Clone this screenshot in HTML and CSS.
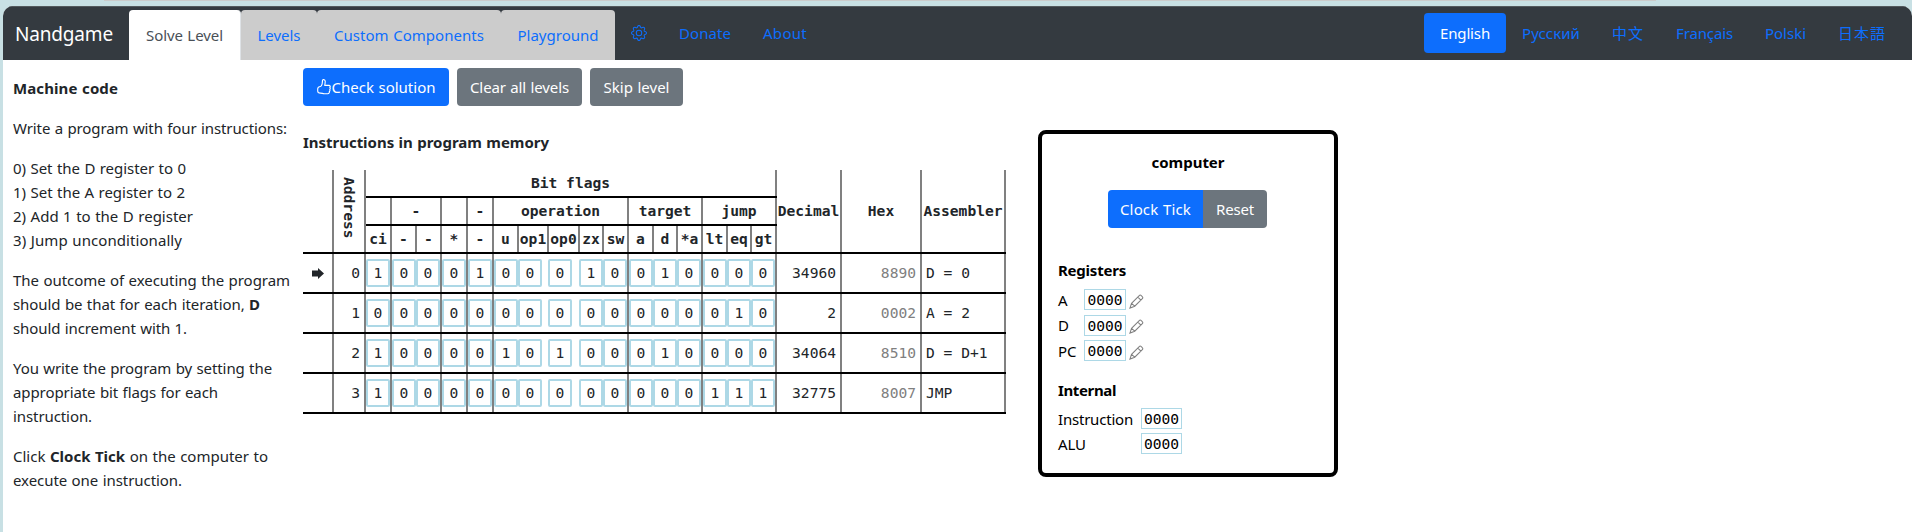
FILE: index.html
```
<!DOCTYPE html>
<html lang="en">
<head>
<meta charset="utf-8">
<title>Nandgame</title>
<link rel="stylesheet" href="styles.css">
</head>
<body>
<div class="strip"></div>
<div class="app">
  <header class="navbar">
    <span class="brand"><span data-w="98">Nandgame</span></span>
    <nav class="tabs">
      <a class="tab active" style="width:112px"><span data-w="77">Solve Level</span></a>
      <a class="tab" style="width:76px"><span data-w="43">Levels</span></a>
      <a class="tab" style="width:184px"><span data-w="150">Custom Components</span></a>
      <a class="tab" style="width:114px"><span data-w="81">Playground</span></a>
    </nav>
    <nav class="links">
      <a><svg class="gear" viewBox="0 0 16 16" fill="currentColor"><path d="M8 4.754a3.246 3.246 0 1 0 0 6.492 3.246 3.246 0 0 0 0-6.492zM5.754 8a2.246 2.246 0 1 1 4.492 0 2.246 2.246 0 0 1-4.492 0z"/><path d="M9.796 1.343c-.527-1.79-3.065-1.79-3.592 0l-.094.319a.873.873 0 0 1-1.255.52l-.292-.16c-1.64-.892-3.433.902-2.54 2.541l.159.292a.873.873 0 0 1-.52 1.255l-.319.094c-1.79.527-1.79 3.065 0 3.592l.319.094a.873.873 0 0 1 .52 1.255l-.16.292c-.892 1.64.901 3.434 2.541 2.54l.292-.159a.873.873 0 0 1 1.255.52l.094.319c.527 1.79 3.065 1.79 3.592 0l.094-.319a.873.873 0 0 1 1.255-.52l.292.16c1.64.893 3.434-.902 2.54-2.541l-.159-.292a.873.873 0 0 1 .52-1.255l.319-.094c1.79-.527 1.79-3.065 0-3.592l-.319-.094a.873.873 0 0 1-.52-1.255l.16-.292c.893-1.64-.902-3.433-2.541-2.54l-.292.159a.873.873 0 0 1-1.255-.52l-.094-.319zm-2.633.283c.246-.835 1.428-.835 1.674 0l.094.319a1.873 1.873 0 0 0 2.693 1.115l.291-.16c.764-.415 1.6.42 1.184 1.185l-.159.292a1.873 1.873 0 0 0 1.116 2.692l.318.094c.835.246.835 1.428 0 1.674l-.319.094a1.873 1.873 0 0 0-1.115 2.693l.16.291c.415.764-.42 1.6-1.185 1.184l-.291-.159a1.873 1.873 0 0 0-2.693 1.116l-.094.318c-.246.835-1.428.835-1.674 0l-.094-.319a1.873 1.873 0 0 0-2.692-1.115l-.292.16c-.764.415-1.6-.42-1.184-1.185l.159-.291A1.873 1.873 0 0 0 1.945 8.93l-.319-.094c-.835-.246-.835-1.428 0-1.674l.319-.094A1.873 1.873 0 0 0 3.06 4.377l-.16-.292c-.415-.764.42-1.6 1.185-1.184l.292.159a1.873 1.873 0 0 0 2.692-1.115l.094-.319z"/></svg></a>
      <a><span data-w="52">Donate</span></a>
      <a><span data-w="44">About</span></a>
    </nav>
    <nav class="langs">
      <a class="current"><span data-w="50">English</span></a>
      <a><span data-w="58">Русский</span></a>
      <a><span data-w="32">中文</span></a>
      <a><span data-w="57">Français</span></a>
      <a><span data-w="41">Polski</span></a>
      <a><span data-w="48" lang="ja">日本語</span></a>
    </nav>
  </header>
  <main class="main">
    <aside class="help">
      <p><b><span data-w="105">Machine code</span></b></p>
      <p><span data-w="274">Write a program with four instructions:</span></p>
      <p><span data-w="173">0) Set the D register to 0</span><br><span data-w="172">1) Set the A register to 2</span><br><span data-w="180">2) Add 1 to the D register</span><br><span data-w="169">3) Jump unconditionally</span></p>
      <p><span data-w="277">The outcome of executing the program</span><br><span data-w="247">should be that for each iteration, <b>D</b></span><br><span data-w="174">should increment with 1.</span></p>
      <p><span data-w="259">You write the program by setting the</span><br><span data-w="205">appropriate bit flags for each</span><br><span data-w="79">instruction.</span></p>
      <p><span data-w="255">Click <b>Clock Tick</b> on the computer to</span><br><span data-w="169">execute one instruction.</span></p>
    </aside>
    <section class="work">
      <div class="toolbar">
        <button class="btn primary" style="width:146px"><svg class="thumb" viewBox="0 0 16 16" fill="none" stroke="currentColor" stroke-width="1.1" stroke-linejoin="round"><path d="M5 7.200C6.200 6 6.500 4 6.500 1.200c0-.9 2.500-.9 2.700.9.100 1.300-.2 3-.5 4.300h4.200c1.500 0 1.600 1.600.9 2.100.7.600.6 1.600-.1 2 .5.700.2 1.600-.4 1.900.3 1.100-.3 2.300-1.600 2.300H8.200c-1.500 0-2.300-.6-3.800-.6-1.800 0-2.700-.9-2.700-2.200V9.700c0-1.400 1.200-2.200 3.300-2.500z"/></svg><span data-w="104">Check solution</span></button>
        <button class="btn" style="width:125px"><span data-w="99">Clear all levels</span></button>
        <button class="btn" style="width:93px"><span data-w="66">Skip level</span></button>
      </div>
      <div class="panels">
        <div class="memory">
          <h2><span data-w="246">Instructions in program memory</span></h2>
          <div class="grid" id="grid">
            <div class="th tall"></div>
            <div class="th tall addr"><span>Address</span></div>
            <div class="th wide">Bit flags</div>
            <div class="th tall">Decimal</div>
            <div class="th tall">Hex</div>
            <div class="th tall">Assembler</div>
            <div class="th"></div><div class="th s2">-</div><div class="th"></div><div class="th">-</div><div class="th s5">operation</div><div class="th s3">target</div><div class="th s3">jump</div>
            <div class="th">ci</div><div class="th">-</div><div class="th">-</div><div class="th">*</div><div class="th">-</div><div class="th">u</div><div class="th">op1</div><div class="th">op0</div><div class="th">zx</div><div class="th">sw</div><div class="th">a</div><div class="th">d</div><div class="th">*a</div><div class="th">lt</div><div class="th">eq</div><div class="th">gt</div>
          </div>
        </div>
        <div class="computer">
          <h3><span data-w="73">computer</span></h3>
          <div class="group">
            <button class="btn primary" style="width:95px"><span data-w="71">Clock Tick</span></button><button class="btn" style="width:64px"><span data-w="38">Reset</span></button>
          </div>
          <h4><span data-w="68">Registers</span></h4>
          <div class="regs">
            <span class="name">A</span><span class="val">0000</span><svg class="pen" viewBox="0 0 16 16"><path d="M1 15l1.700-5 8.500-8.600c1-1 4.400 2.100 3.300 3.200L6.100 13zM2.700 10l3.400 3M9.400 3.300l3.300 3.200"/></svg>
            <span class="name">D</span><span class="val">0000</span><svg class="pen" viewBox="0 0 16 16"><path d="M1 15l1.700-5 8.500-8.600c1-1 4.400 2.100 3.300 3.200L6.100 13zM2.700 10l3.400 3M9.400 3.300l3.300 3.200"/></svg>
            <span class="name">PC</span><span class="val">0000</span><svg class="pen" viewBox="0 0 16 16"><path d="M1 15l1.700-5 8.500-8.600c1-1 4.400 2.100 3.300 3.200L6.100 13zM2.700 10l3.400 3M9.400 3.300l3.300 3.200"/></svg>
          </div>
          <h4 class="second"><span data-w="58">Internal</span></h4>
          <div class="internals">
            <span class="name"><span data-w="75">Instruction</span></span><span class="val">0000</span>
            <span class="name"><span data-w="28">ALU</span></span><span class="val">0000</span>
          </div>
        </div>
      </div>
    </section>
  </main>
</div>
<script src="app.js"></script>
</body>
</html>
```
FILE: styles.css
```
* { box-sizing: border-box; }
body {
  margin: 0;
  height: 532px;
  overflow: hidden;
  background: #c8e0e4;
  color: #212529;
  font: 15px/24px "Noto Sans", "Noto Sans CJK SC", sans-serif;
}
[lang="ja"] { font-family: "Noto Sans CJK JP", sans-serif; }
span[data-w] { white-space: nowrap; word-spacing: 0.6px; }
.strip { height: 1px; margin: 0 256px 5px 104px; background: #cbcbcb; }
.app {
  height: 526px;
  margin-left: 3px;
  background: #fff;
  border-radius: 10px 10px 0 0;
  overflow: hidden;
}
.navbar {
  display: flex;
  height: 54px;
  background: #343a40;
  border-top: 1px solid #53595d;
  color: #0d6efd;
}
.brand {
  width: 126px;
  padding: 12px 0 0 12px;
  color: #fff;
  font-size: 19px;
  line-height: 30px;
}
.tabs { display: flex; padding-top: 3px; }
.tab {
  display: flex;
  justify-content: center;
  height: 50px;
  padding-top: 13px;
  background: #ccc;
  border-radius: 4px 4px 0 0;
}
.tab.active { background: #fff; color: #495057; border-right: 1px solid #dee2e6; }
.links { display: flex; gap: 32px; padding: 14px 0 0 16px; }
.gear { display: block; width: 16px; height: 16px; margin-top: 4px; }
.langs { display: flex; margin: 6px 10px 0 auto; height: 40px; }
.langs a { padding: 8px 16px; border-radius: 4px; }
.langs .current { background: #0d6efd; color: #fff; }
.main { display: flex; }
.help { width: 290px; padding: 16px 0 0 10px; margin-right: 10px; }
.help p { margin: 0 0 16px; }
.work { padding-top: 8px; }
.toolbar { display: flex; gap: 8px; }
.btn {
  display: flex;
  align-items: center;
  justify-content: center;
  height: 38px;
  padding: 0;
  border: 0;
  border-radius: 4px;
  background: #6c757d;
  color: #fff;
  font: inherit;
}
.btn.primary { background: #0d6efd; }
.thumb { width: 16px; height: 16px; margin-left: -1px; }
.panels { display: flex; align-items: flex-start; gap: 32px; padding-top: 24px; }
h2, h3, h4 { margin: 0; font-size: 15px; line-height: 24px; font-weight: 700; }
h2 { margin: 0 0 16px; }
.grid {
  display: grid;
  grid-template-columns: 31px 32px 26px 25px 25px 26px 26px 25px 30px 31px 24px 25px 25px 24px 25px 25px 24px 25px 65px 80px 84px;
  grid-template-rows: 28px 28px 28px repeat(4, 40px);
  width: 703px;
  font: 14.6px/24px "DejaVu Sans Mono", monospace;
}
.grid > div {
  display: flex;
  align-items: center;
  justify-content: center;
  min-width: 0;
  padding: 0 2px 2px 0;
  box-shadow: inset 0 -2px #000, inset -2px 0 #808080;
  white-space: nowrap;
}
.grid .th { font-weight: 700; }
.tall { grid-row: span 3; }
.addr span { writing-mode: vertical-rl; margin-top: -6px; }
.wide { grid-column: span 16; }
.s2 { grid-column: span 2; }
.s3 { grid-column: span 3; }
.s5 { grid-column: span 5; }
.grid > .inner { box-shadow: inset 0 -2px #000; }
.grid > .num { justify-content: flex-end; padding-right: 6px; }
.grid > .hex { color: #808080; }
.grid > .asm { justify-content: flex-start; padding-left: 4px; }
.grid > .bit { justify-content: flex-start; }
.bit span {
  flex: none;
  width: 24px;
  height: 28px;
  border: 2px solid #add8e6;
  border-radius: 2px;
  text-align: center;
}
.bit.follow span { margin-left: -1px; }
.arrow { width: 12px; height: 11px; fill: #212529; }
.computer {
  width: 300px;
  height: 347px;
  padding: 16px;
  border: 4px solid #000;
  border-radius: 8px;
  color: #000;
}
h3 { text-align: center; }
.group { display: flex; justify-content: center; margin: 16px 1px 30px 0; }
.group .primary { border-radius: 4px 0 0 4px; }
.group .btn:last-child { border-radius: 0 4px 4px 0; }
.regs, .internals { display: grid; align-items: center; margin-top: 5px; }
.regs { grid-template: 25px 26px 25px / 26px 45px 16px; }
.internals { grid-template: 25px 25px / 83px 41px; }
.second { margin-top: 15px; }
.val {
  width: 42px;
  height: 21px;
  border: 1px solid #add8e6;
  font: 14.6px/19px "DejaVu Sans Mono", monospace;
  text-align: center;
}
.internals { margin-top: 4px; }
.internals .val { width: 41px; }
.pen { width: 15px; height: 15px; margin-top: 3px; fill: none; stroke: #808080; stroke-width: 1.1; }
```
FILE: app.js
```
const rows = [
  ["1000100010010000", "34960", "8890", "D = 0"],
  ["0000000000000010", "2", "0002", "A = 2"],
  ["1000010100010000", "34064", "8510", "D = D+1"],
  ["1000000000000111", "32775", "8007", "JMP"]
];
const groupStart = [0, 1, 3, 4, 5, 10, 13];
const arrow = '<svg class="arrow" viewBox="0 0 12 11"><path d="M0 2.500h6V0l6 5.500L6 11V8.500H0z"/></svg>';
let html = "";
rows.forEach(([bits, dec, hex, asm], r) => {
  html += `<div>${r === 0 ? arrow : ""}</div><div class="num">${r}</div>`;
  [...bits].forEach((b, i) => {
    const follow = groupStart.includes(i) ? "" : " follow";
    const inner = i === 15 || groupStart.includes(i + 1) ? "" : " inner";
    html += `<div class="bit${follow}${inner}"><span>${b}</span></div>`;
  });
  html += `<div class="num">${dec}</div><div class="num hex">${hex}</div><div class="asm">${asm}</div>`;
});
document.getElementById("grid").insertAdjacentHTML("beforeend", html);

// Track each label to its nominal width.
document.querySelectorAll("span[data-w]").forEach(el => {
  const diff = el.dataset.w - el.getBoundingClientRect().width;
  const n = el.textContent.length;
  el.style.letterSpacing = diff / n + "px";
});
```
